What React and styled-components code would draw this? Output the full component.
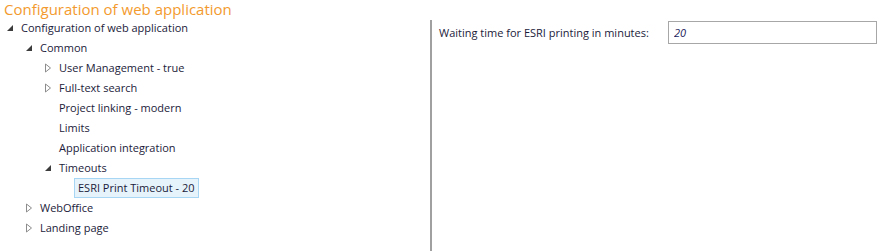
import React from 'react';
import styled, { createGlobalStyle } from 'styled-components';

const GlobalStyle = createGlobalStyle`
  html, body {
    margin: 0;
    padding: 0;
    background: #ffffff;
  }
  body {
    font-family: "Open Sans", "Noto Sans", sans-serif;
  }
`;

const tree = [
  {
    label: 'Configuration of web application',
    open: true,
    children: [
      {
        label: 'Common',
        open: true,
        children: [
          { label: 'User Management - true', collapsed: true },
          { label: 'Full-text search', collapsed: true },
          { label: 'Project linking - modern' },
          { label: 'Limits' },
          { label: 'Application integration' },
          {
            label: 'Timeouts',
            open: true,
            children: [{ label: 'ESRI Print Timeout - 20', selected: true }],
          },
        ],
      },
      { label: 'WebOffice', collapsed: true },
      { label: 'Landing page', collapsed: true },
    ],
  },
];

const ExpandedIcon = () => (
  <svg width="8" height="8" viewBox="0 0 8 8">
    <polygon points="7,1 7,7 1,7" fill="#3c3c3c" />
  </svg>
);

const CollapsedIcon = () => (
  <svg width="8" height="10" viewBox="0 0 8 10">
    <polygon points="1.5,1 6.5,5 1.5,9" fill="none" stroke="#8c8c8c" strokeWidth="1" />
  </svg>
);

const TreeNode = ({ node, depth }) => (
  <>
    <Row $depth={depth}>
      <Toggle>
        {node.open && <ExpandedIcon />}
        {node.collapsed && <CollapsedIcon />}
      </Toggle>
      <Label $selected={node.selected}>{node.label}</Label>
    </Row>
    {node.open &&
      (node.children || []).map((child) => (
        <TreeNode key={child.label} node={child} depth={depth + 1} />
      ))}
  </>
);

const App = () => (
  <>
    <GlobalStyle />
    <Page>
      <Title>Configuration of web application</Title>
      <Body>
        <TreePanel>
          {tree.map((node) => (
            <TreeNode key={node.label} node={node} depth={0} />
          ))}
        </TreePanel>
        <DetailPanel>
          <Field>
            <FieldLabel>Waiting time for ESRI printing in minutes:</FieldLabel>
            <FieldInput defaultValue="20" />
          </Field>
        </DetailPanel>
      </Body>
    </Page>
  </>
);

const Page = styled.div`
  width: 881px;
  height: 251px;
  overflow: hidden;
  display: flex;
  flex-direction: column;
`;

const Title = styled.div`
  height: 18px;
  padding-left: 4px;
  font-size: 15px;
  line-height: 19px;
  color: #f39a2e;
  white-space: nowrap;
`;

const Body = styled.div`
  flex: 1;
  display: flex;
`;

const TreePanel = styled.div`
  width: 430px;
  display: flex;
  flex-direction: column;
`;

const Row = styled.div`
  height: 20px;
  display: flex;
  align-items: center;
  padding-left: ${(p) => 4 + p.$depth * 19}px;
`;

const Toggle = styled.span`
  width: 12px;
  display: flex;
  align-items: center;
  justify-content: center;
  margin-right: 1px;
`;

const Label = styled.span`
  font-size: 11px;
  color: #1b1b3a;
  white-space: nowrap;
  padding: 0 3px;
  line-height: 18px;
  border: 1px solid ${(p) => (p.$selected ? '#a6d6f3' : 'transparent')};
  background: ${(p) => (p.$selected ? '#e6f3fb' : 'transparent')};
`;

const DetailPanel = styled.div`
  flex: 1;
  border-left: 2px solid #a0a0a0;
  margin-top: 2px;
  padding: 0 4px 0 7px;
`;

const Field = styled.div`
  display: flex;
  align-items: center;
  gap: 12px;
  height: 24px;
`;

const FieldLabel = styled.span`
  width: 217px;
  font-size: 11px;
  color: #1b1b3a;
  white-space: nowrap;
`;

const FieldInput = styled.input`
  flex: 1;
  height: 23px;
  box-sizing: border-box;
  border: 1px solid #a7a7a7;
  padding: 0 5px;
  font-family: inherit;
  font-size: 11px;
  font-style: italic;
  color: #1b1b5a;
  outline: none;
`;

export default App;
